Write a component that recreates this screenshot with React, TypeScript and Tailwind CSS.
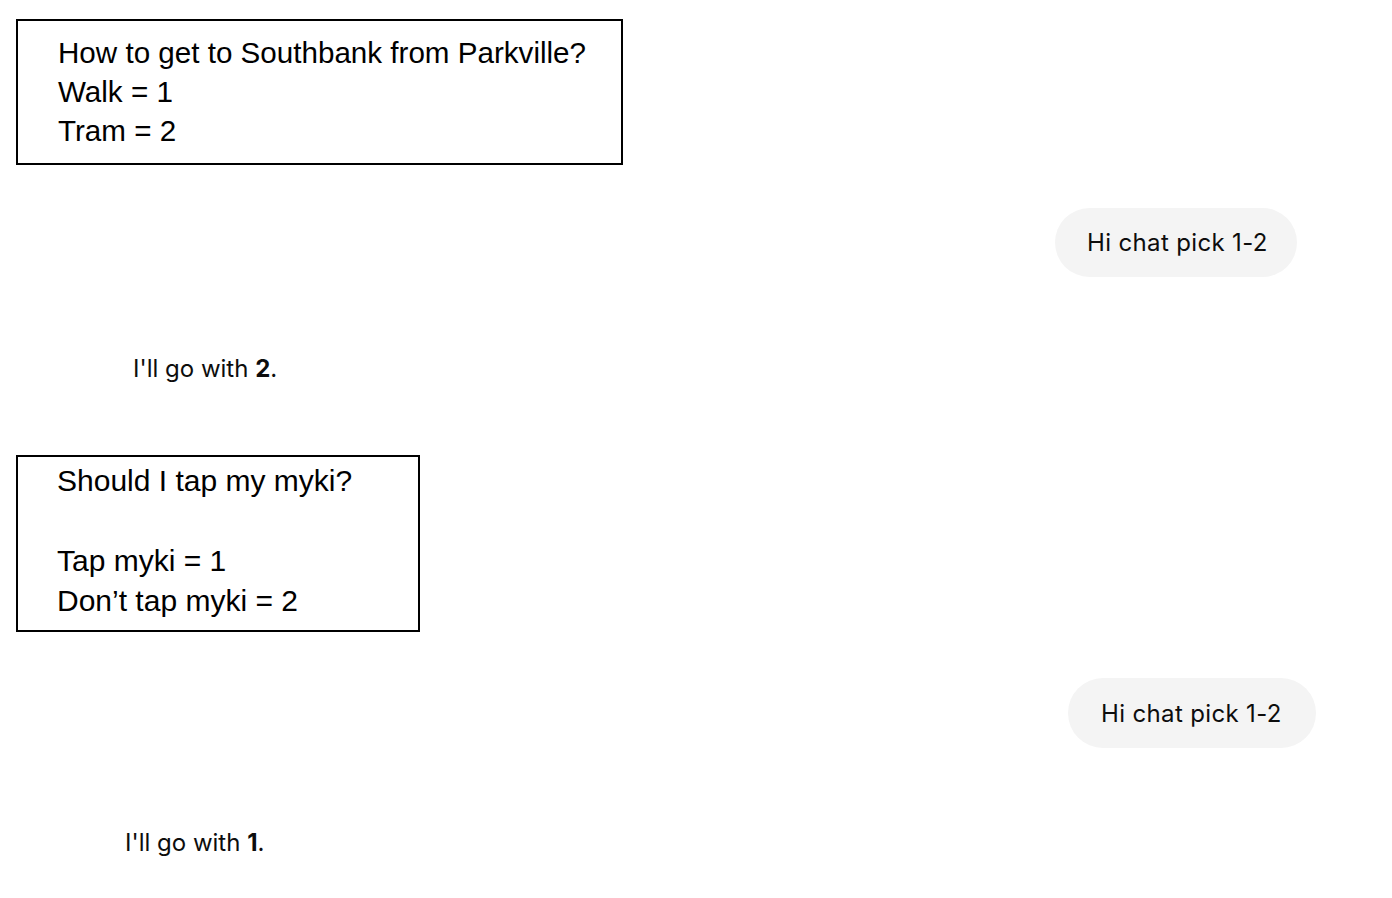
export default function App() {
  return (
    <div className="min-h-[898px] w-full bg-white">
      <div className="flex flex-col">
        <PollBox
          className="ml-4 mt-[19px] h-[146px] w-[607px] pl-[40px] pt-[12px] text-[29.6px] leading-[39px]"
          lineClass="h-[39px]"
          lines={["How to get to Southbank from Parkville?", "Walk = 1", "Tram = 2"]}
        />

        <Bubble className="mr-[95px] mt-[43px] h-[69px] w-[242px] pl-[32px]" text="Hi chat pick 1-2" />

        <Reply className="ml-[133px] mt-[76px]" pick="2" />

        <PollBox
          className="ml-4 mt-[71px] h-[177px] w-[404px] pl-[39px] pt-[4px] text-[30px] leading-[40px]"
          lineClass="h-[40px]"
          lines={["Should I tap my myki?", "", "Tap myki = 1", "Don’t tap myki = 2"]}
        />

        <Bubble className="mr-[76px] mt-[46px] h-[70px] w-[248px] pl-[33px]" text="Hi chat pick 1-2" />

        <Reply className="ml-[125px] mt-[79px]" pick="1" />
      </div>
    </div>
  );
}

function PollBox({
  lines,
  className,
  lineClass,
}: {
  lines: string[];
  className: string;
  lineClass: string;
}) {
  return (
    <div
      className={[
        "border-2 border-black font-['Liberation_Sans',Arial,sans-serif] text-black",
        className,
      ].join(" ")}
    >
      {lines.map((l, i) => (
        <div key={i} className={["whitespace-nowrap", lineClass].join(" ")}>
          {l}
        </div>
      ))}
    </div>
  );
}

function Bubble({ text, className }: { text: string; className: string }) {
  return (
    <div
      className={[
        "flex items-center self-end rounded-full bg-[#f4f4f4] font-['Inter',sans-serif] text-[24px] leading-[31px] tracking-[0.35px] text-[#0d0d0d]",
        className,
      ].join(" ")}
    >
      {text}
    </div>
  );
}

function Reply({ pick, className }: { pick: string; className: string }) {
  return (
    <div
      className={[
        "font-['Inter',sans-serif] text-[24px] leading-[31px] text-[#0d0d0d]",
        className,
      ].join(" ")}
    >
      I'll go with <span className="font-bold">{pick}</span>.
    </div>
  );
}
